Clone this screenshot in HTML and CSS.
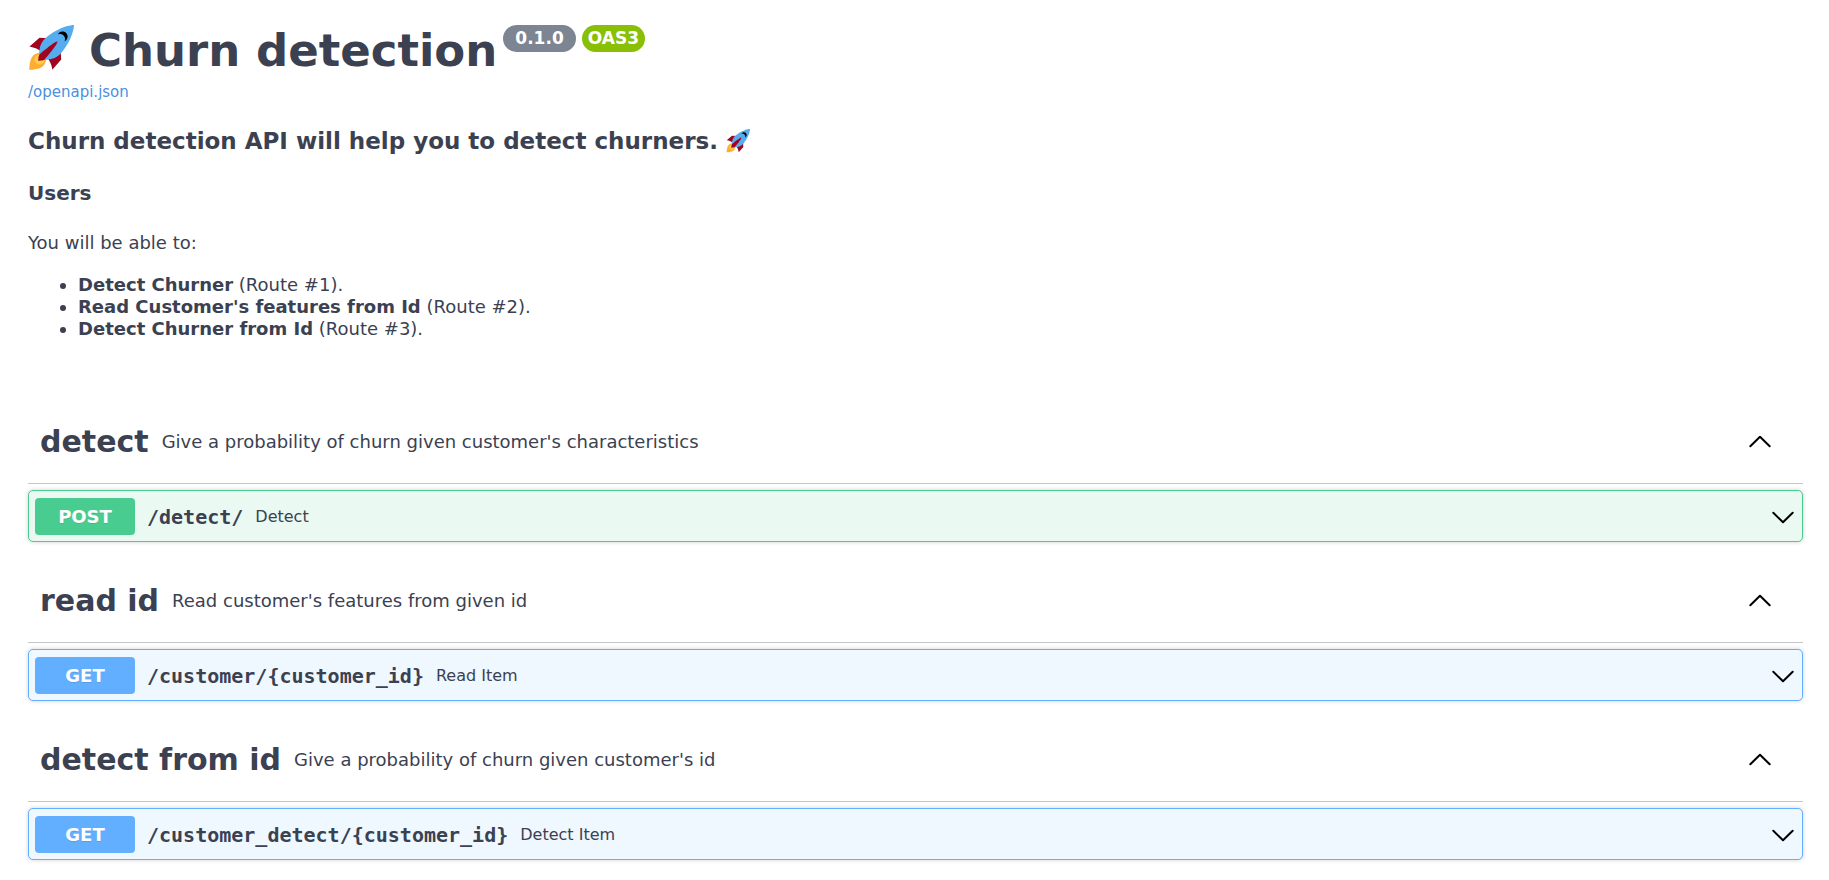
FILE: index.html
```html
<!DOCTYPE html>
<html lang="en">
<head>
<meta charset="utf-8">
<meta name="viewport" content="width=device-width, initial-scale=1">
<title>Churn detection</title>
<link rel="stylesheet" href="styles.css">
</head>
<body>
<svg class="sprite" aria-hidden="true">
  <symbol id="rocket" viewBox="0 0 36 36">
    <path fill="#A0041E" d="M1 17l8-7 16 1 1 16-7 8s.001-5.999-6-12-12-6-12-6z"/>
    <path fill="#FFAC33" d="M.973 35s-.036-7.979 2.985-11S15 21.187 15 21.187 14.999 29 11.999 32c-3 3-11.026 3-11.026 3z"/>
    <circle fill="#FFCC4D" cx="8.999" cy="27" r="4"/>
    <path fill="#55ACEE" d="M35.999 0s-10 0-22 10c-6 5-6 14-4 16s11 2 16-4c10-12 10-22 10-22z"/>
    <path d="M26.999 5c-1.623 0-3.013.971-3.641 2.36.502-.227 1.055-.36 1.641-.36 2.209 0 4 1.791 4 4 0 .586-.133 1.139-.359 1.640 1.389-.627 2.359-2.017 2.359-3.640 0-2.209-1.791-4-4-4z"/>
    <path fill="#A0041E" d="M8 28s0-4 1-5 13.001-10.999 14-10-9.001 13-10.001 14S8 28 8 28z"/>
  </symbol>
  <symbol id="chevron-up" viewBox="0 0 24 24">
    <path d="M2.300 16.300 12 6.700l9.700 9.600" fill="none" stroke="#000" stroke-width="2" stroke-linecap="round" stroke-linejoin="round"/>
  </symbol>
  <symbol id="chevron-down" viewBox="0 0 24 24">
    <path d="M2.300 7.700 12 17.300l9.700-9.600" fill="none" stroke="#000" stroke-width="2" stroke-linecap="round" stroke-linejoin="round"/>
  </symbol>
</svg>
<main class="page">
  <header class="info">
    <div class="title-row">
      <h1 class="title"><svg class="title-icon" role="img" aria-label="rocket"><use href="#rocket"/></svg>Churn detection</h1>
      <span class="badge badge-version">0.1.0</span>
      <span class="badge badge-spec">OAS3</span>
    </div>
    <a class="spec-link" href="/openapi.json">/openapi.json</a>
    <h2 class="tagline">Churn detection API will help you to detect churners.<svg class="tagline-icon" role="img" aria-label="rocket"><use href="#rocket"/></svg></h2>
    <h3 class="subhead">Users</h3>
    <p class="intro">You will be able to:</p>
    <ul class="routes">
      <li><strong>Detect Churner</strong> (Route #1).</li>
      <li><strong>Read Customer's features from Id</strong> (Route #2).</li>
      <li><strong>Detect Churner from Id</strong> (Route #3).</li>
    </ul>
  </header>

  <section class="tag">
    <div class="tag-head">
      <h3 class="tag-name">detect</h3>
      <p class="tag-text">Give a probability of churn given customer's characteristics</p>
      <button class="toggle" type="button" aria-label="Collapse detect" aria-expanded="true"><svg class="chevron"><use href="#chevron-up"/></svg></button>
    </div>
    <button class="operation post" type="button" aria-expanded="false">
      <span class="method">POST</span>
      <span class="path">/detect/</span>
      <span class="summary">Detect</span>
      <svg class="chevron" aria-hidden="true"><use href="#chevron-down"/></svg>
    </button>
  </section>

  <section class="tag">
    <div class="tag-head">
      <h3 class="tag-name">read id</h3>
      <p class="tag-text">Read customer's features from given id</p>
      <button class="toggle" type="button" aria-label="Collapse read id" aria-expanded="true"><svg class="chevron"><use href="#chevron-up"/></svg></button>
    </div>
    <button class="operation get" type="button" aria-expanded="false">
      <span class="method">GET</span>
      <span class="path">/customer/{customer_id}</span>
      <span class="summary">Read Item</span>
      <svg class="chevron" aria-hidden="true"><use href="#chevron-down"/></svg>
    </button>
  </section>

  <section class="tag">
    <div class="tag-head">
      <h3 class="tag-name">detect from id</h3>
      <p class="tag-text">Give a probability of churn given customer's id</p>
      <button class="toggle" type="button" aria-label="Collapse detect from id" aria-expanded="true"><svg class="chevron"><use href="#chevron-up"/></svg></button>
    </div>
    <button class="operation get" type="button" aria-expanded="false">
      <span class="method">GET</span>
      <span class="path">/customer_detect/{customer_id}</span>
      <span class="summary">Detect Item</span>
      <svg class="chevron" aria-hidden="true"><use href="#chevron-down"/></svg>
    </button>
  </section>
</main>
</body>
</html>
```
FILE: styles.css
```css
* {
  box-sizing: border-box;
}

body {
  margin: 0;
  background: #fff;
  color: #3b4151;
  font-family: "DejaVu Sans", sans-serif;
  font-size: 18px;
  line-height: 22px;
}

h1, h2, h3, p, ul {
  margin: 0;
}

button {
  border: 0;
  background: none;
  color: inherit;
  font: inherit;
  text-align: left;
  cursor: pointer;
}

.sprite {
  position: absolute;
  width: 0;
  height: 0;
}

.page {
  padding: 25px 26px 0 28px;
}

.info {
  padding-bottom: 60px;
}

.title-row {
  display: flex;
  align-items: flex-start;
  gap: 6px;
}

.title {
  display: flex;
  align-items: flex-start;
  gap: 15px;
  font-size: 45px;
  line-height: 52px;
}

.title-icon {
  width: 46px;
  height: 46px;
}

.badge {
  border-radius: 14px;
  color: #fff;
  font-size: 17px;
  font-weight: 700;
  line-height: 27px;
}

.badge-version {
  padding: 0 12px;
  background: #7d8492;
}

.badge-spec {
  padding: 0 6px;
  background: #89bf04;
}

.spec-link {
  display: block;
  width: fit-content;
  margin-top: 4px;
  color: #4990e2;
  font-size: 15px;
  text-decoration: none;
}

.tagline {
  display: flex;
  align-items: center;
  gap: 8px;
  margin-top: 24px;
  font-size: 23px;
  line-height: 28px;
}

.tagline-icon {
  width: 24px;
  height: 24px;
}

.subhead {
  margin-top: 26px;
  font-size: 20px;
  line-height: 24px;
}

.intro {
  margin-top: 27px;
}

.routes {
  margin-top: 20px;
  padding-left: 50px;
}

.tag {
  margin-bottom: 17px;
}

.tag-head {
  display: flex;
  align-items: center;
  gap: 13px;
  height: 84px;
  margin-bottom: 6px;
  padding: 0 31px 0 12px;
  border-bottom: 1px solid rgba(59, 65, 81, 0.3);
}

.tag-name {
  font-size: 30px;
  line-height: 36px;
}

.toggle {
  display: flex;
  margin-left: auto;
  padding: 0;
}

.chevron {
  width: 24px;
  height: 24px;
}

.operation {
  display: flex;
  align-items: center;
  gap: 12px;
  width: 100%;
  padding: 7px 7px 6px 6px;
  border: 1px solid;
  border-radius: 5px;
  box-shadow: 0 0 4px rgba(0, 0, 0, 0.19);
}

.method {
  min-width: 100px;
  border-radius: 4px;
  color: #fff;
  font-weight: 700;
  line-height: 37px;
  text-align: center;
  text-shadow: 0 1px 0 rgba(0, 0, 0, 0.1);
}

.path {
  font-family: "DejaVu Sans Mono", monospace;
  font-size: 20px;
  font-weight: 700;
}

.summary {
  font-size: 16px;
}

.operation .chevron {
  margin-left: auto;
}

.post {
  border-color: #49cc90;
  background: #ebf9f3;
}

.post .method {
  background: #49cc90;
}

.get {
  border-color: #61affe;
  background: #eff7ff;
}

.get .method {
  background: #61affe;
}
```
